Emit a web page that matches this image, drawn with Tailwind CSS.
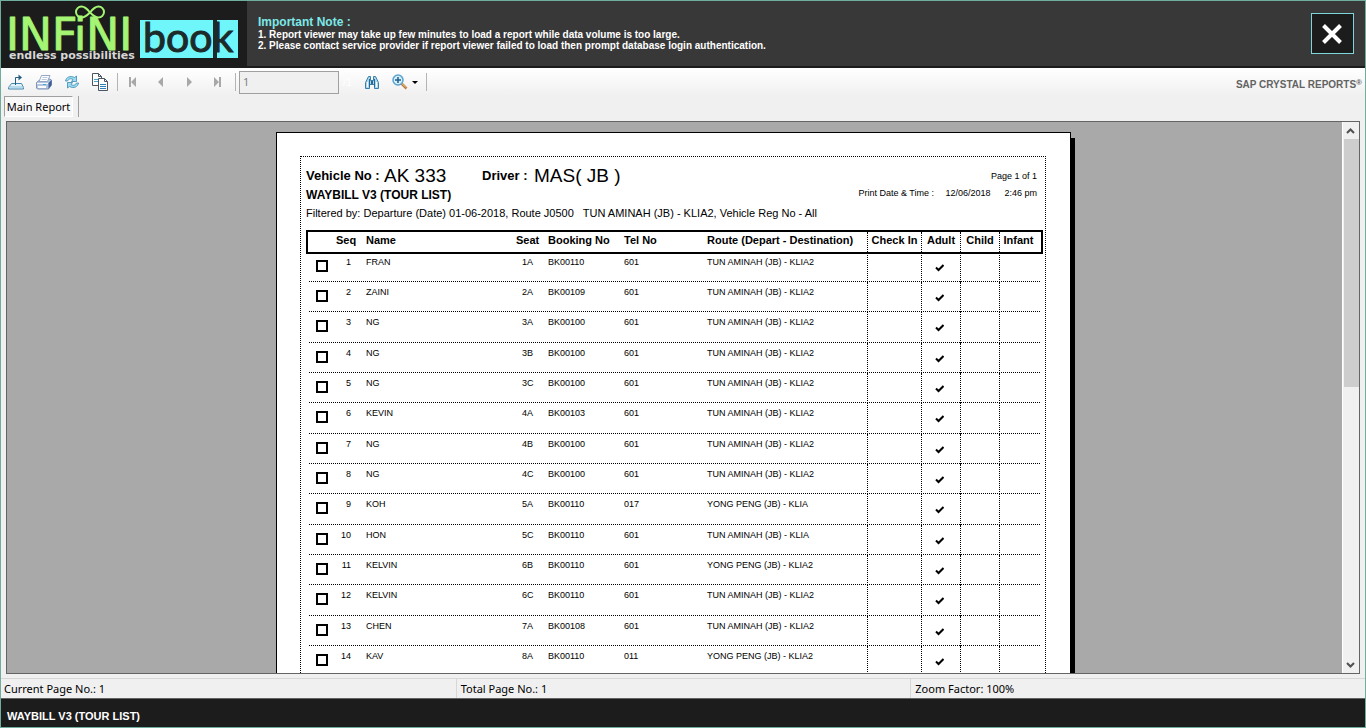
<!DOCTYPE html>
<html lang="en">
<head>
    <meta charset="UTF-8">
    <meta name="viewport" content="width=device-width, initial-scale=1.0">
    <title>WAYBILL V3 (TOUR LIST)</title>

    <!-- Tailwind CSS -->
    <script src="https://cdn.jsdelivr.net/npm/@tailwindcss/browser@4"></script>
</head>
<body class="h-screen flex flex-col overflow-hidden border border-[#6fae9c] bg-[#f0f0f0] font-['Liberation_Sans',sans-serif] text-black">

    <!-- Header -->
    <header class="flex h-[67px] shrink-0 items-stretch border-b-2 border-[#1c1c1c] bg-[#383838]">
        <!-- Logo -->
        <div class="w-[246px] shrink-0 bg-[#1c1c1c]">
            <svg class="block h-[65px] w-[246px]" viewBox="1 1 246 65" role="img" aria-label="INFINI book">
                <path d="M90 12.500C86.500 8 84 6.500 81.500 6.500a5.500 5.500 0 0 0 0 11C84 17.500 86.500 16 90 12.500C93.500 8 96 6.500 98.500 6.500a5.500 5.500 0 0 1 0 11C96 17.500 93.500 16 90 12.500Z" fill="none" stroke="#a4f573" stroke-width="2"/>
                <rect x="140" y="20" width="98" height="38" fill="#6ff6fb"/>
                <rect x="213" y="20" width="4" height="38" fill="#1c2a2a"/>
                <text x="6" y="50" font-family="DejaVu Sans" font-size="44" fill="#a4f573" stroke="#a4f573" stroke-width="1" stroke-linejoin="round">INFiNI</text>
                <text x="9" y="59" font-family="DejaVu Sans" font-size="11" font-weight="700" fill="#d6d6d6">endless possibilities</text>
                <text x="143" y="52" font-family="Lato" font-size="41" fill="#1c2a2a" stroke="#1c2a2a" stroke-width="1">book</text>
            </svg>
        </div>

        <!-- Note -->
        <div class="flex-1 pl-[11px] pt-[14px] font-bold text-white">
            <h1 class="text-[12px] leading-[14px] text-[#7de8e8]">Important Note :</h1>
            <p class="text-[10px] leading-[11px]">1. Report viewer may take up few minutes to load a report while data volume is too large.</p>
            <p class="text-[10px] leading-[11px]">2. Please contact service provider if report viewer failed to load then prompt database login authentication.</p>
        </div>

        <button type="button" aria-label="Close" class="mr-[11px] mt-3 flex h-[41px] w-[43px] items-center justify-center border border-[#7fd6da] bg-[#1c1c1c] pr-0.5">
            <svg class="h-5 w-5" viewBox="0 0 20 20" stroke="#fff" stroke-width="4"><path d="M1.500 1.500L18.500 18.500M18.500 1.500L1.500 18.500"/></svg>
        </button>
    </header>

    <!-- Toolbar -->
    <div class="flex h-7 shrink-0 items-center bg-linear-to-b from-white to-[#f0f0f0] pl-px">
        <button type="button" aria-label="Export" class="flex h-7 w-7 items-center justify-center">
            <svg class="h-4 w-4" viewBox="0 0 16 16" fill="none">
                <path d="M3.500 9.500h10l2 4v1.500H.500v-1.500z" fill="#e3f3fb" stroke="#4688ad"/>
                <path d="M.500 13h15" stroke="#8cc3dd"/>
                <path d="M7.500 11V3.500h4" stroke="#255f80"/>
                <path d="M10.500 .500L14 3.500L10.500 6.500z" fill="#255f80"/>
            </svg>
        </button>
        <button type="button" aria-label="Print" class="flex h-7 w-7 items-center justify-center">
            <svg class="h-4 w-4" viewBox="0 0 16 16">
                <path d="M.500 8.500L3 6.500h8l1.500-2 3 1.500v5l-3 4H1.500l-1-1z" fill="#b4c5de" stroke="#8194b8"/>
                <path d="M5.500 1.500h8.500l-2.500 6H3z" fill="#fff" stroke="#93a6c4"/>
                <path d="M6.500 3.500h5M5.700 5.500h5" stroke="#bccadd"/>
                <path d="M12.500 9l3-3v5l-3 4z" fill="#3f5f96"/>
                <path d="M2 12h8v2H2z" fill="#fff"/>
                <path d="M1 9.500h11" stroke="#f4f7fb"/>
                <path d="M7 10.500h3" stroke="#49a9d8"/>
            </svg>
        </button>
        <button type="button" aria-label="Refresh" class="flex h-7 w-7 items-center justify-center">
            <svg class="h-4 w-4" viewBox="0 0 16 16" fill="#9bdcf2" stroke="#3a8ab0" stroke-width=".8">
                <path d="M1.500 7C2 3.500 6 1 10.500 3.500L12.500 2V7.500H7.500L9 5.500C6.500 4 4.500 5 3.500 7z"/>
                <path d="M14.500 9C14 12.500 10 15 5.500 12.500L3.500 14V8.500H8.500L7 10.500C9.500 12 11.500 11 12.500 9z"/>
            </svg>
        </button>
        <button type="button" aria-label="Copy" class="flex h-7 w-7 items-center justify-center">
            <svg class="h-[18px] w-[18px]" viewBox="0 0 18 18" fill="#fff" stroke="#4c5560">
                <path d="M1.500 .500h6l3 3v9h-9z"/>
                <path d="M7.500 .500v3h3" fill="none"/>
                <path d="M3 6.500h5M3 8.500h5" stroke="#4aa3d4"/>
                <path d="M7.500 5.500h6l3 3v9h-9z"/>
                <path d="M13.500 5.500v3h3" fill="none"/>
                <path d="M9 11.500h6M9 13.500h6M9 15.500h6" stroke="#2c7fb8"/>
            </svg>
        </button>
        <span class="ml-[3px] mr-px h-[18px] w-px bg-[#b4b4b4]"></span>
        <button type="button" aria-label="First page" disabled class="flex h-7 w-7 items-center justify-center">
            <svg class="h-[10px] w-[8px]" viewBox="0 0 8 10" fill="#a8a8a8"><path d="M0 0h2v10H0zM7 0v10L2 5z"/></svg>
        </button>
        <button type="button" aria-label="Previous page" disabled class="flex h-7 w-7 items-center justify-center">
            <svg class="h-[10px] w-[6px]" viewBox="0 0 6 10" fill="#a8a8a8"><path d="M5 0v10L0 5z"/></svg>
        </button>
        <button type="button" aria-label="Next page" disabled class="flex h-7 w-7 items-center justify-center">
            <svg class="h-[10px] w-[6px]" viewBox="0 0 6 10" fill="#a8a8a8"><path d="M1 0v10L6 5z"/></svg>
        </button>
        <button type="button" aria-label="Last page" disabled class="flex h-7 w-7 items-center justify-center">
            <svg class="h-[10px] w-[8px]" viewBox="0 0 8 10" fill="#a8a8a8"><path d="M6 0h2v10H6zM1 0v10L6 5z"/></svg>
        </button>
        <span class="mx-[3px] ml-1 h-[18px] w-px bg-[#b4b4b4]"></span>
        <input type="text" aria-label="Page number" value="1" disabled class="h-[23px] w-[100px] border border-[#a0a0a0] bg-[#f0f0f0] px-[3px] pb-0.5 font-['Noto_Sans','Liberation_Sans',sans-serif] text-[11px] leading-4 text-[#808080]">
        <span class="w-5 pl-1 text-[11px] text-white">/1</span>
        <button type="button" aria-label="Find" class="flex h-7 w-7 items-center justify-center pr-0.5">
            <svg class="h-[13px] w-[14px]" viewBox="0 0 14 13" stroke="#3b7ea8" fill="#a8d7ee">
                <path d="M3.500 .500h2v4h3v-4h2l3 6v6h-4v-4h-5v4h-4v-6z"/>
                <path d="M2.500 6v5M11.500 6v5" stroke="#fff"/>
                <path d="M4.500 3v8M9.500 3v8M6.500 5v3M7.500 5v3" stroke="#2a6690"/>
            </svg>
        </button>
        <button type="button" aria-label="Zoom" class="flex h-7 w-9 items-center justify-center gap-1 pr-px">
            <svg class="h-4 w-4" viewBox="0 0 16 16" fill="none">
                <path d="M9.500 9.500L14.500 14.500" stroke="#b87b3e" stroke-width="2.500"/>
                <path d="M9.500 9L14 13.500" stroke="#f6c98c"/>
                <circle cx="6" cy="6" r="5" fill="#d5effb" stroke="#5aa3cf" stroke-width="1.500"/>
                <path d="M3 6h6M6 3v6" stroke="#1f5f90" stroke-width="1.500"/>
            </svg>
            <svg class="h-[3px] w-[6px]" viewBox="0 0 6 3"><path d="M0 0h6L3 3z"/></svg>
        </button>
        <span class="ml-[3px] h-[18px] w-px bg-[#b4b4b4]"></span>
        <span class="ml-auto mr-[3px] mt-1 text-[10px] font-bold text-[#636363]">SAP CRYSTAL REPORTS<span class="text-[8px] align-top">®</span></span>
    </div>

    <!-- Tabs -->
    <div class="flex h-[25px] shrink-0 items-start pl-[3px]">
        <button type="button" class="h-[21px] w-[69px] border border-[#a0a0a0] border-b-white border-r-white bg-[#f8f8f8] text-center font-['Noto_Sans','Liberation_Sans',sans-serif] text-[11px] leading-5 whitespace-nowrap">Main Report</button>
        <span class="ml-[5px] h-[21px] w-px bg-[#a0a0a0]"></span>
    </div>

    <!-- Report viewer -->
    <main class="mx-[5px] flex min-h-0 flex-1 border border-[#646464] bg-[#a9a9a9]">
        <div class="min-w-0 flex-1 overflow-hidden pr-0.5 pt-[10px]">
            <div class="mx-auto w-[795px] border border-black bg-white py-[23px] pr-6 pl-[23px] shadow-[4px_6px_0_#000]">
                <div class="border border-dotted border-black px-[5px] pb-6 pt-2">
                    <div class="flex justify-between">
                        <div>
                            <div class="flex h-[22px] items-center">
                                <span class="w-[78px] text-[13px] font-bold whitespace-nowrap">Vehicle No :</span>
                                <span class="w-[98px] text-[19px] whitespace-nowrap">AK 333</span>
                                <span class="w-[52px] text-[13px] font-bold whitespace-nowrap">Driver :</span>
                                <span class="text-[19px] whitespace-pre">MAS( JB )</span>
                            </div>
                            <h2 class="text-[12px] leading-4 font-bold">WAYBILL V3 (TOUR LIST)</h2>
                        </div>
                        <div class="pr-[3px] pt-[5px] text-right text-[9px]">
                            <p class="leading-[13px] pb-1">Page 1 of 1</p>
                            <p class="flex leading-[13px]"><span class="w-[87px] text-left">Print Date &amp; Time :</span><span class="w-[59px] text-left">12/06/2018</span><span>2:46 pm</span></p>
                        </div>
                    </div>
                    <p class="mt-px text-[11px] leading-[18px] whitespace-pre">Filtered by: Departure (Date) 01-06-2018, Route J0500   TUN AMINAH (JB) - KLIA2, Vehicle Reg No - All</p>

                    <!-- Passenger list -->
                    <table class="mt-[10px] ml-0.5 w-[733px] table-fixed border-separate border-spacing-0 text-[9px]">
                        <colgroup>
                            <col class="w-[24px]">
                            <col class="w-[34px]">
                            <col class="w-[150px]">
                            <col class="w-[32px]">
                            <col class="w-[76px]">
                            <col class="w-[83px]">
                            <col class="w-[160px]">
                            <col class="w-[54px]">
                            <col class="w-[39px]">
                            <col class="w-[39px]">
                            <col class="w-[42px]">
                        </colgroup>
                        <thead>
                            <tr class="h-5 text-left text-[11px] leading-[15px] whitespace-nowrap outline-2 outline-black">
                                <th class="p-0"></th>
                                <th class="p-0 pl-1 pb-[3px]">Seq</th>
                                <th class="p-0 pb-[3px]">Name</th>
                                <th class="p-0 pb-[3px]">Seat</th>
                                <th class="p-0 pb-[3px]">Booking No</th>
                                <th class="p-0 pb-[3px]">Tel No</th>
                                <th class="p-0 pb-[3px]">Route (Depart - Destination)</th>
                                <th class="border-l border-dotted border-black p-0 pb-[3px] text-center">Check In</th>
                                <th class="border-l border-dotted border-black p-0 pb-[3px] text-center">Adult</th>
                                <th class="border-l border-dotted border-black p-0 pb-[3px] text-center">Child</th>
                                <th class="border-l border-dotted border-black p-0 pb-[3px] pr-1 text-center">Infant</th>
                            </tr>
                        </thead>
                        <tbody id="passengers"></tbody>
                    </table>
                </div>
            </div>
        </div>

        <!-- Scrollbar -->
        <div class="flex w-[17px] shrink-0 flex-col items-center border-l border-white bg-[#f0f0f0]">
            <svg class="h-[17px] w-4 shrink-0" viewBox="0 0 16 17" fill="none" stroke="#505050" stroke-width="2"><path d="M4 11L7.500 7.500L11 11"/></svg>
            <div class="h-[248px] w-[15px] bg-[#cdcdcd]"></div>
            <svg class="mt-auto h-[17px] w-4 shrink-0" viewBox="0 0 16 17" fill="none" stroke="#505050" stroke-width="2"><path d="M4 7L7.500 10.500L11 7"/></svg>
        </div>
    </main>

    <!-- Status bar -->
    <div class="mt-1 grid h-5 shrink-0 grid-cols-3 border-t border-[#d7d7d7] font-['Noto_Sans','Liberation_Sans',sans-serif] text-[11px] leading-5">
        <span class="pl-[3px]">Current Page No.: 1</span>
        <span class="border-l border-[#d7d7d7] pl-1">Total Page No.: 1</span>
        <span class="border-l border-[#d7d7d7] pl-1">Zoom Factor: 100%</span>
    </div>

    <!-- Footer -->
    <footer class="h-[29px] shrink-0 border-t border-[#646464] bg-[#1c1c1c] pl-1.5 pt-[9px] text-[11px] leading-4 font-bold text-white">WAYBILL V3 (TOUR LIST)</footer>

    <script>
        // Rows of the waybill: name, seat, booking no, tel no, route
        const passengers = [
            ['FRAN', '1A', 'BK00110', '601', 'TUN AMINAH (JB) - KLIA2'],
            ['ZAINI', '2A', 'BK00109', '601', 'TUN AMINAH (JB) - KLIA2'],
            ['NG', '3A', 'BK00100', '601', 'TUN AMINAH (JB) - KLIA2'],
            ['NG', '3B', 'BK00100', '601', 'TUN AMINAH (JB) - KLIA2'],
            ['NG', '3C', 'BK00100', '601', 'TUN AMINAH (JB) - KLIA2'],
            ['KEVIN', '4A', 'BK00103', '601', 'TUN AMINAH (JB) - KLIA2'],
            ['NG', '4B', 'BK00100', '601', 'TUN AMINAH (JB) - KLIA2'],
            ['NG', '4C', 'BK00100', '601', 'TUN AMINAH (JB) - KLIA2'],
            ['KOH', '5A', 'BK00110', '017', 'YONG PENG (JB) - KLIA'],
            ['HON', '5C', 'BK00110', '601', 'TUN AMINAH (JB) - KLIA'],
            ['KELVIN', '6B', 'BK00110', '601', 'YONG PENG (JB) - KLIA2'],
            ['KELVIN', '6C', 'BK00110', '601', 'TUN AMINAH (JB) - KLIA2'],
            ['CHEN', '7A', 'BK00108', '601', 'TUN AMINAH (JB) - KLIA2'],
            ['KAV', '8A', 'BK00110', '011', 'YONG PENG (JB) - KLIA2'],
        ];

        const tbody = document.getElementById('passengers');

        passengers.forEach(([name, seat, booking, tel, route], i) => {
            const row = document.createElement('tr');
            // The dotted rule is one background, so it runs unbroken across the cells
            row.className = 'h-[30px] nth-[3n]:h-[31px] bg-[repeating-linear-gradient(to_right,transparent_0_1px,#000_1px_2px)] bg-[length:100%_1px] bg-bottom bg-no-repeat align-top leading-[12px] whitespace-nowrap';
            row.innerHTML = `
                <td class="p-0 pt-2 pl-2"><input type="checkbox" aria-label="Select ${name}" class="block h-3 w-3 appearance-none border-2 border-black bg-white"></td>
                <td class="p-0 pt-1 pr-[15px] text-right">${i + 1}</td>
                <td class="p-0 pt-1">${name}</td>
                <td class="p-0 pt-1 pl-1.5">${seat}</td>
                <td class="p-0 pt-1">${booking}</td>
                <td class="p-0 pt-1">${tel}</td>
                <td class="p-0 pt-1">${route}</td>
                <td class="border-l border-dotted border-black p-0"></td>
                <td class="border-l border-dotted border-black p-0 pt-3 pl-[13px]"><svg class="h-2 w-[9px]" viewBox="0 0 9 8" fill="none" stroke="#000" stroke-width="2"><path d="M1 3.500L3.500 6L8.500 1"/></svg></td>
                <td class="border-l border-dotted border-black p-0"></td>
                <td class="border-l border-dotted border-black p-0"></td>
            `;
            tbody.appendChild(row);
        });
    </script>
</body>
</html>
